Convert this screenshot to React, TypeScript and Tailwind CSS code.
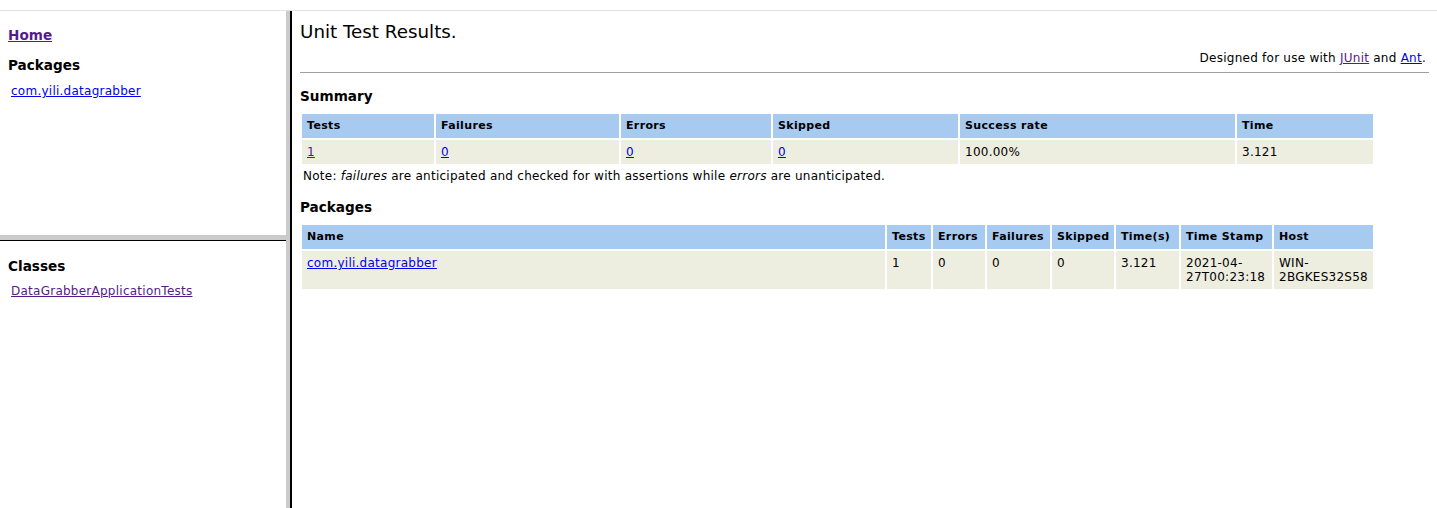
const visited = "text-[#551a8b] underline";
const link = "text-[#0000ee] underline";

const summaryCols = [
  { label: "Tests", w: "w-[132px]" },
  { label: "Failures", w: "w-[183px]" },
  { label: "Errors", w: "w-[150px]" },
  { label: "Skipped", w: "w-[185px]" },
  { label: "Success rate", w: "w-[275px]" },
  { label: "Time", w: "w-[136px]" },
];

const packageCols = [
  { label: "Name", w: "w-[583px]" },
  { label: "Tests", w: "w-[44px]" },
  { label: "Errors", w: "w-[52px]" },
  { label: "Failures", w: "w-[63px]" },
  { label: "Skipped", w: "w-[62px]" },
  { label: "Time(s)", w: "w-[63px]" },
  { label: "Time Stamp", w: "w-[91px]" },
  { label: "Host", w: "w-[99px]" },
];

function Th({ children, w }: { children: React.ReactNode; w: string }) {
  return (
    <th className={`${w} bg-[#a6caf0] px-[5px] py-[5px] text-left align-top text-[11px] font-bold leading-[14px] tracking-[0.35px] whitespace-nowrap`}>
      {children}
    </th>
  );
}

function Td({ children }: { children: React.ReactNode }) {
  return <td className="bg-[#eeeee0] px-[5px] py-[5px] align-top leading-[14px]">{children}</td>;
}

export default function App() {
  return (
    <div className="flex h-[508px] w-[1437px] flex-col overflow-hidden bg-white font-['DejaVu_Sans','Liberation_Sans',sans-serif] text-[12px] tracking-[0.25px] text-black">
      <div className="h-[11px] border-b border-[#e2e2e2]" />
      <div className="flex min-h-0 flex-1">
        {/* left frames */}
        <div className="flex w-[286px] flex-col">
          <div className="h-[224px] pl-[8px] pt-[16px]">
            <h2 className="text-[13.6px] font-bold leading-[16px] tracking-normal">
              <a className={visited}>Home</a>
            </h2>
            <h2 className="mt-[14px] text-[13.6px] font-bold leading-[16px] tracking-normal">Packages</h2>
            <div className="mt-[11px] pl-[3px] leading-[14px]">
              <a className={link}>com.yili.datagrabber</a>
            </div>
          </div>
          <div className="h-[5px] bg-[#cbcbcb]" />
          <div className="h-[1px] bg-black" />
          <div className="flex-1 pl-[8px] pt-[17px]">
            <h2 className="text-[13.6px] font-bold leading-[16px] tracking-normal">Classes</h2>
            <div className="mt-[10px] pl-[3px] leading-[14px]">
              <a className={visited}>DataGrabberApplicationTests</a>
            </div>
          </div>
        </div>
        <div className="w-[4px] bg-[#cbcbcb]" />
        <div className="w-[2px] bg-black" />

        {/* main frame */}
        <div className="min-w-0 flex-1 px-[8px] pt-[9px]">
          <h1 className="h-[24px] text-[18.3px] leading-[24px] tracking-normal">Unit Test Results.</h1>
          <div className="mt-[7px] pr-[3px] text-right leading-[14px]">
            Designed for use with <a className={visited}>JUnit</a> and <a className={link}>Ant</a>.
          </div>
          <div className="mt-[7px] border-t border-[#a0a0a0]" />

          <h2 className="mt-[15px] text-[13.6px] font-bold leading-[16px] tracking-normal">Summary</h2>
          <table className="mt-[8px] w-[1075px] table-fixed border-separate border-spacing-[2px]">
            <thead>
              <tr>
                {summaryCols.map((c) => (
                  <Th key={c.label} w={c.w}>
                    {c.label}
                  </Th>
                ))}
              </tr>
            </thead>
            <tbody>
              <tr>
                <Td>
                  <a className={visited}>1</a>
                </Td>
                <Td>
                  <a className={link}>0</a>
                </Td>
                <Td>
                  <a className={link}>0</a>
                </Td>
                <Td>
                  <a className={link}>0</a>
                </Td>
                <Td>100.00%</Td>
                <Td>3.121</Td>
              </tr>
            </tbody>
          </table>
          <div className="mt-[3px] pl-[3px] leading-[14px]">
            Note: <i>failures</i> are anticipated and checked for with assertions while <i>errors</i> are
            unanticipated.
          </div>

          <h2 className="mt-[16px] text-[13.6px] font-bold leading-[16px] tracking-normal">Packages</h2>
          <table className="mt-[8px] w-[1075px] table-fixed border-separate border-spacing-[2px]">
            <thead>
              <tr>
                {packageCols.map((c) => (
                  <Th key={c.label} w={c.w}>
                    {c.label}
                  </Th>
                ))}
              </tr>
            </thead>
            <tbody>
              <tr>
                <Td>
                  <a className={link}>com.yili.datagrabber</a>
                </Td>
                <Td>1</Td>
                <Td>0</Td>
                <Td>0</Td>
                <Td>0</Td>
                <Td>3.121</Td>
                <Td>2021-04-27T00:23:18</Td>
                <Td>WIN-2BGKES32S58</Td>
              </tr>
            </tbody>
          </table>
        </div>
      </div>
    </div>
  );
}
